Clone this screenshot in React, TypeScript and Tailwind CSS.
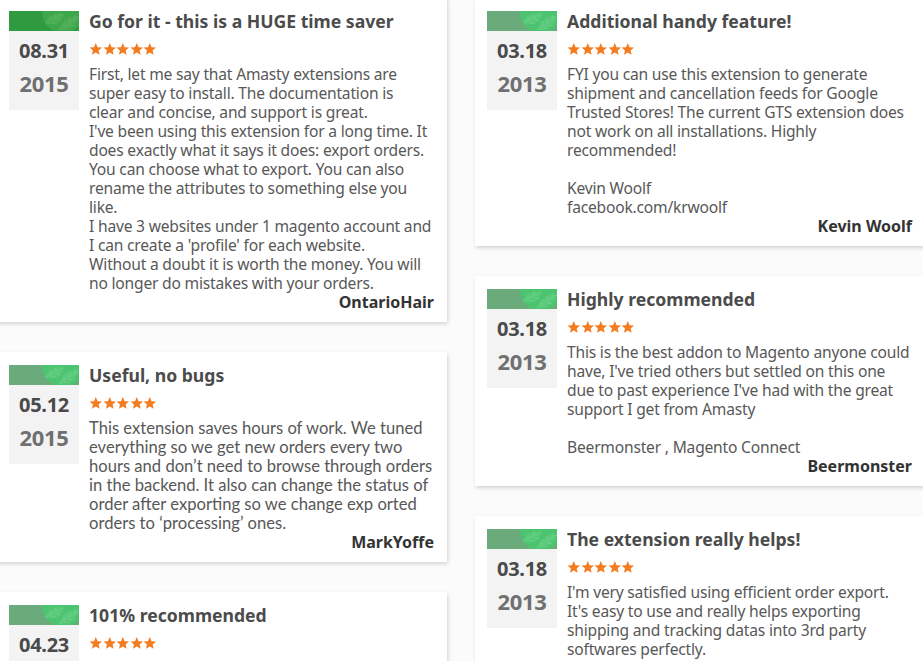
import React from "react"

type Review = {
  title: string
  date: string
  year: string
  lines: string[]
  author: string
  highlight?: boolean
  alt?: boolean
}

const left: Review[] = [
  {
    title: "Go for it - this is a HUGE time saver",
    date: "08.31",
    year: "2015",
    highlight: true,
    lines: [
      "First, let me say that Amasty extensions are",
      "super easy to install. The documentation is",
      "clear and concise, and support is great.",
      "I've been using this extension for a long time. It",
      "does exactly what it says it does: export orders.",
      "You can choose what to export. You can also",
      "rename the attributes to something else you",
      "like.",
      "I have 3 websites under 1 magento account and",
      "I can create a 'profile' for each website.",
      "Without a doubt it is worth the money. You will",
      "no longer do mistakes with your orders.",
    ],
    author: "OntarioHair",
  },
  {
    title: "Useful, no bugs",
    date: "05.12",
    year: "2015",
    alt: true,
    lines: [
      "This extension saves hours of work. We tuned",
      "everything so we get new orders every two",
      "hours and don\u2019t need to browse through orders",
      "in the backend. It also can change the status of",
      "order after exporting so we change exp orted",
      "orders to \u2018processing\u2019 ones.",
    ],
    author: "MarkYoffe",
  },
  {
    title: "101% recommended",
    date: "04.23",
    year: "2015",
    lines: ["", "", ""],
    author: "",
  },
]

const right: Review[] = [
  {
    title: "Additional handy feature!",
    date: "03.18",
    year: "2013",
    lines: [
      "FYI you can use this extension to generate",
      "shipment and cancellation feeds for Google",
      "Trusted Stores! The current GTS extension does",
      "not work on all installations. Highly",
      "recommended!",
      "",
      "Kevin Woolf",
      "facebook.com/krwoolf",
    ],
    author: "Kevin Woolf",
  },
  {
    title: "Highly recommended",
    date: "03.18",
    year: "2013",
    lines: [
      "This is the best addon to Magento anyone could",
      "have, I've tried others but settled on this one",
      "due to past experience I've had with the great",
      "support I get from Amasty",
      "",
      "Beermonster , Magento Connect",
    ],
    author: "Beermonster",
  },
  {
    title: "The extension really helps!",
    date: "03.18",
    year: "2013",
    lines: [
      "I'm very satisfied using efficient order export.",
      "It's easy to use and really helps exporting",
      "shipping and tracking datas into 3rd party",
      "softwares perfectly.",
      "",
      "",
    ],
    author: "",
  },
]

// green strip on top of the date box, with the leaf circle on its right end
function Band({ highlight }: { highlight?: boolean }) {
  const base = highlight ? "#2f9a3f" : "#6bab7b"
  const leaf = highlight ? "#3fa74b" : "#4cc46f"
  const vein = highlight ? "#62bb68" : "#74d590"
  const id = highlight ? "bandH" : "bandN"
  return (
    <svg width="70" height="20" viewBox="0 0 70 20" className="block">
      <defs>
        <clipPath id={id}>
          <rect width="70" height="20" />
        </clipPath>
      </defs>
      <rect width="70" height="20" fill={base} />
      <g clipPath={`url(#${id})`}>
        <circle cx="54" cy="1" r="21" fill={leaf} />
        <path d="M36 12 C40 3 50 0 55 3 C53 12 44 16 36 12 Z" fill={vein} opacity="0.3" />
        <path d="M36 12 L54 3 M41 9 L41 4 M46 7 L46 2 M42 11 L48 13 M47 8 L52 10" stroke={vein} strokeWidth="0.7" fill="none" opacity="0.8" />
        <path d="M50 19 C53 9 62 4 70 5 C69 13 60 20 50 19 Z" fill={vein} opacity="0.3" />
        <path d="M50 19 L69 6 M55 15 L55 10 M60 12 L61 7 M65 9 L66 4 M55 17 L61 18 M60 14 L66 15" stroke={vein} strokeWidth="0.7" fill="none" opacity="0.8" />
      </g>
    </svg>
  )
}

function Stars() {
  return (
    <div className="flex h-4 items-center">
      {[0, 1, 2, 3, 4].map((i) => (
        <svg key={i} width="13.6" height="14" viewBox="0 0 24 24">
          <path
            d="M12 1.5l3.1 7.2 7.8.7-5.9 5.2 1.8 7.7L12 18.3l-6.8 4 1.8-7.7L1.1 9.4l7.8-.7z"
            fill="#f37b20"
          />
        </svg>
      ))}
    </div>
  )
}

function Card({ r }: { r: Review }) {
  return (
    <div className="flex bg-white pt-[13px] pb-[10px] pl-[12px] pr-[13px] shadow-[1px_2px_4px_rgba(0,0,0,0.16)]">
      <div className="w-[70px] h-[99px] shrink-0 bg-[#f3f3f3]">
        <Band highlight={r.highlight} />
        <div className="text-center font-bold text-[20px] leading-[20px] mt-[10px] text-[#4a4a4a] tracking-[-0.3px]">
          {r.date}
        </div>
        <div className="text-center font-bold text-[22px] leading-[22px] mt-[11px] text-[#707070] tracking-[-0.3px]">
          {r.year}
        </div>
      </div>
      <div className="ml-[10px] flex-1 min-w-0">
        <div className="text-[17.6px] leading-[22px] -mt-[1px] font-bold text-[#4b4b4b] whitespace-nowrap">
          {r.title}
        </div>
        <div className="mt-[9px]">
          <Stars />
        </div>
        <div
          className={
            "mt-[8px] leading-[19px] text-[#585858] whitespace-nowrap " +
            (r.alt ? "font-['Lato',sans-serif] text-[16.6px]" : "text-[15.6px] tracking-[-0.2px]")
          }
        >
          {r.lines.map((l, i) => (
            <div key={i} className="h-[19px]">
              {l}
            </div>
          ))}
        </div>
        {r.author && (
          <div className="text-right font-bold text-[16px] leading-[19px] text-[#333]">{r.author}</div>
        )}
      </div>
    </div>
  )
}

export default function App() {
  return (
    <div className="w-[923px] h-[661px] overflow-hidden bg-[#fbfbfb] font-['Noto_Sans','Open_Sans',sans-serif]">
      <div className="flex gap-[28px] -ml-[3px] -mt-[2px] w-[928px]">
        <div className="w-[450px] shrink-0 flex flex-col gap-[30px]">
          {left.map((r, i) => (
            <Card key={i} r={r} />
          ))}
        </div>
        <div className="w-[450px] shrink-0 flex flex-col gap-[30px]">
          {right.map((r, i) => (
            <Card key={i} r={r} />
          ))}
        </div>
      </div>
    </div>
  )
}
